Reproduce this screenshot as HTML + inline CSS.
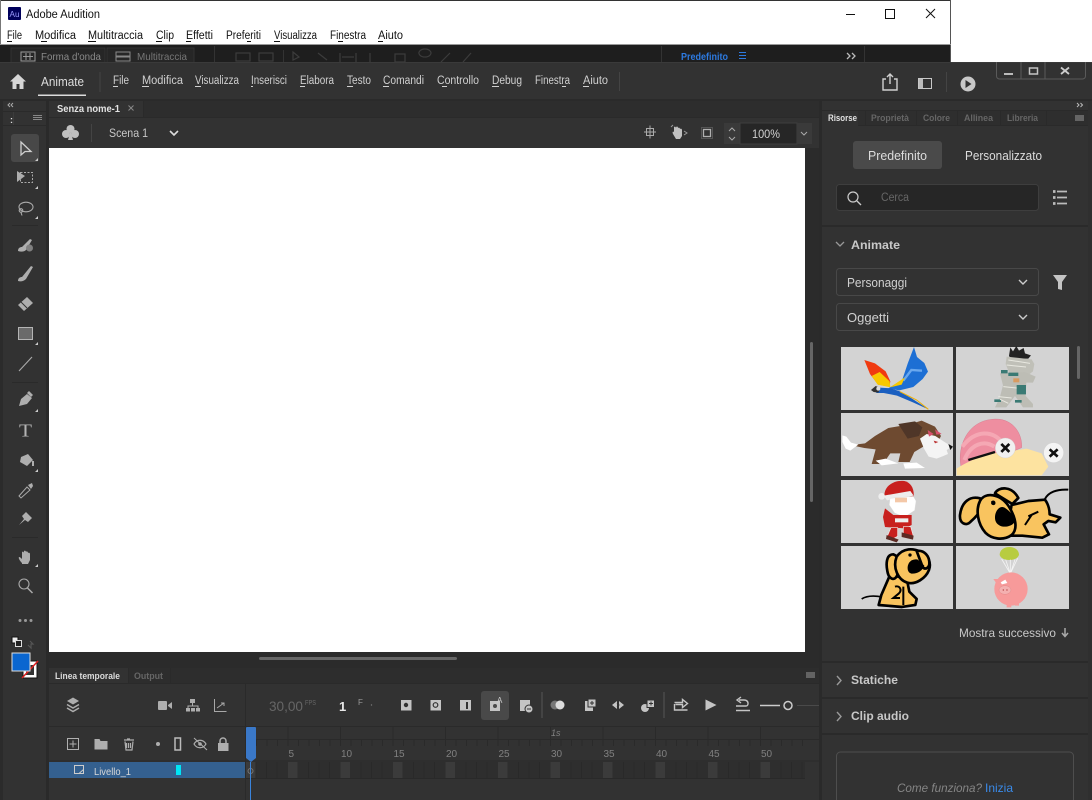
<!DOCTYPE html>
<html><head><meta charset="utf-8"><title>Adobe Animate</title>
<style>
html,body{margin:0;padding:0;width:1092px;height:800px;overflow:hidden;background:#fff}
svg{display:block;font-family:"Liberation Sans",sans-serif}
.m{font-size:11.5px;fill:#111}
.a{font-size:11.5px;fill:#d0d0d0}
.i{fill:none;stroke:#aaa;stroke-width:1.1}
.f{fill:#aeaeae}
.u{stroke:#d0d0d0;stroke-width:1}
.w{stroke:#111;stroke-width:1}
</style></head><body>
<svg width="1092" height="800" viewBox="0 0 1092 800" xmlns="http://www.w3.org/2000/svg">
<!-- Audition window -->
<rect width="1092" height="800" fill="#fff"/>
<rect x="0" y="0" width="951" height="1" fill="#333"/>
<rect x="950" y="0" width="1" height="62" fill="#555"/>
<rect x="0" y="0" width="1" height="62" fill="#777"/>
<rect x="8" y="7" width="13" height="13" fill="#00005b" rx="1"/>
<text x="9.5" y="17" font-size="8" fill="#9999ff" textLength="10" lengthAdjust="spacingAndGlyphs">Au</text>
<text x="26" y="18" class="m" textLength="74" lengthAdjust="spacingAndGlyphs">Adobe Audition</text>
<rect x="846" y="14" width="9" height="1" fill="#111"/>
<rect x="885.5" y="9.5" width="9" height="9" fill="none" stroke="#111"/>
<path d="M926 9l9 9M935 9l-9 9" stroke="#111" fill="none"/>
<g class="m">
<text x="7" y="39" textLength="15" lengthAdjust="spacingAndGlyphs">File</text>
<text x="35" y="39" textLength="41" lengthAdjust="spacingAndGlyphs">Modifica</text>
<text x="88" y="39" textLength="55" lengthAdjust="spacingAndGlyphs">Multitraccia</text>
<text x="156" y="39" textLength="18" lengthAdjust="spacingAndGlyphs">Clip</text>
<text x="186" y="39" textLength="27" lengthAdjust="spacingAndGlyphs">Effetti</text>
<text x="226" y="39" textLength="35" lengthAdjust="spacingAndGlyphs">Preferiti</text>
<text x="274" y="39" textLength="43" lengthAdjust="spacingAndGlyphs">Visualizza</text>
<text x="330" y="39" textLength="36" lengthAdjust="spacingAndGlyphs">Finestra</text>
<text x="378" y="39" textLength="25" lengthAdjust="spacingAndGlyphs">Aiuto</text>
</g>
<path class="w" d="M7 41.5h5M41 41.5h6M88 41.5h8M156 41.5h6M186 41.5h5M247 41.5h4M274 41.5h6M338 41.5h5M378 41.5h5"/>
<rect x="0" y="44" width="951" height="1" fill="#999"/>
<rect x="0" y="45" width="950" height="18" fill="#1e1e1e"/>
<rect x="11" y="48" width="94" height="15" fill="#262626" stroke="#333"/>
<rect x="107" y="48" width="87" height="15" fill="#262626" stroke="#333"/>
<rect x="21" y="52" width="14" height="9" fill="none" stroke="#999"/>
<path d="M23 56.5h10M26 53v7M30 53v7" stroke="#999"/>
<rect x="116" y="52" width="14" height="9" fill="none" stroke="#888"/><path d="M116 56.5h14" stroke="#888" stroke-width="2"/>
<text x="41" y="60" font-size="10.5" fill="#8a8a8a" textLength="60" lengthAdjust="spacingAndGlyphs">Forma d'onda</text>
<text x="137" y="60" font-size="10.5" fill="#777" textLength="50" lengthAdjust="spacingAndGlyphs">Multitraccia</text>
<path d="M214.5 46v17M661.5 46v17M864.5 46v17M283.5 50v12" stroke="#333"/>
<g fill="none" stroke="#3c3c3c" stroke-width="1.2">
<rect x="236" y="53" width="14" height="8"/><rect x="259" y="53" width="14" height="8"/>
<path d="M293 52l6 5-6 3zM318 53l9 7M340 53v9M356 53v9M342 57h12M370 53v9M395 54h10v8h-10zM425 57a6 4 0 1 0-.1 0M441 62l9-9M463 62l8-9"/>
</g>
<text x="681" y="60" font-size="10.5" fill="#2d7ae0" font-weight="bold" textLength="47" lengthAdjust="spacingAndGlyphs">Predefinito</text>
<path d="M739 52.5h7M739 55.5h7M739 58.5h7" stroke="#2d7ae0"/>
<path d="M847 53l3 3-3 3M852 53l3 3-3 3" fill="none" stroke="#bbb" stroke-width="1.3"/>

<!-- Animate window -->
<rect x="0" y="62" width="1092" height="738" fill="#323232"/>
<rect x="0" y="62" width="1092" height="1" fill="#3a3a3a"/>
<path d="M10 81.5l8-7.5 8 7.5h-2.500v7.500h-4v-5h-3v5h-4v-7.500z" fill="#d6d6d6"/>
<text x="41" y="86" font-size="12.5" fill="#dcdcdc" textLength="43" lengthAdjust="spacingAndGlyphs">Animate</text>
<rect x="38" y="94.500" width="48" height="1.500" fill="#dcdcdc"/>
<path d="M100 72v20M619.500 72v19M946.500 72v20" stroke="#444"/>
<g class="a">
<text x="113" y="84" textLength="16" lengthAdjust="spacingAndGlyphs">File</text>
<text x="142" y="84" textLength="41" lengthAdjust="spacingAndGlyphs">Modifica</text>
<text x="195" y="84" textLength="44" lengthAdjust="spacingAndGlyphs">Visualizza</text>
<text x="251" y="84" textLength="36" lengthAdjust="spacingAndGlyphs">Inserisci</text>
<text x="300" y="84" textLength="34" lengthAdjust="spacingAndGlyphs">Elabora</text>
<text x="347" y="84" textLength="24" lengthAdjust="spacingAndGlyphs">Testo</text>
<text x="383" y="84" textLength="41" lengthAdjust="spacingAndGlyphs">Comandi</text>
<text x="437" y="84" textLength="42" lengthAdjust="spacingAndGlyphs">Controllo</text>
<text x="492" y="84" textLength="30" lengthAdjust="spacingAndGlyphs">Debug</text>
<text x="535" y="84" textLength="35" lengthAdjust="spacingAndGlyphs">Finestra</text>
<text x="583" y="84" textLength="25" lengthAdjust="spacingAndGlyphs">Aiuto</text>
</g>
<path class="u" d="M113 86.500h5M142 86.500h7M195 86.500h6M251 86.500h2M300 86.500h5M347 86.500h6M383 86.500h6M442 86.500h5M492 86.500h7M562 86.500h4M583 86.500h6"/>
<!-- top-right -->
<path d="M886 79h-3v11h14v-11h-3M890 84v-9M887 77l3-3 3 3" fill="none" stroke="#d0d0d0" stroke-width="1.400"/>
<rect x="918.500" y="78.500" width="13" height="10" fill="none" stroke="#c8c8c8"/><rect x="919" y="79" width="4" height="9" fill="#bbb"/>
<circle cx="968" cy="84" r="7.500" fill="#c8c8c8"/><path d="M965.500 80l6 4-6 4z" fill="#323232"/>
<path d="M996.500 62v14a3 3 0 0 0 3 3h83a3 3 0 0 0 3-3v-14M1021 62v17M1045 62v17" fill="none" stroke="#5a5a5a"/>
<rect x="1004" y="73" width="9" height="2" fill="#bbb"/>
<rect x="1029.500" y="68" width="8" height="6" fill="none" stroke="#c4c4c4" stroke-width="1.500"/>
<path d="M1061 67.500l8 6.500M1069 67.500l-8 6.500" stroke="#ccc" stroke-width="1.800"/>

<!-- divider row -->
<rect x="0" y="99" width="1092" height="2" fill="#2a2a2a"/>
<!-- left edge + toolbar -->
<rect x="0" y="101" width="3" height="699" fill="#2b2b2b"/>
<rect x="46" y="101" width="3" height="699" fill="#2a2a2a"/>
<path d="M10 103l-2 2 2 2M13 103l-2 2 2 2" fill="none" stroke="#aaa"/>
<rect x="3" y="111" width="43" height="1" fill="#2a2a2a"/>
<rect x="3" y="125" width="43" height="1" fill="#2a2a2a"/>
<rect x="13" y="112" width="1" height="13" fill="#3c3c3c"/>
<text x="10" y="123" font-size="9" fill="#ddd" font-weight="bold">:</text>
<path d="M33 115.500h9M33 117.500h9M33 119.500h9" stroke="#888" stroke-width="1"/>

<!-- doc tab + scene bar -->
<rect x="49" y="101" width="771" height="16" fill="#2d2d2d"/>
<rect x="49" y="101" width="94" height="16" fill="#323232"/>
<rect x="143" y="101" width="1" height="16" fill="#2a2a2a"/>
<rect x="49" y="117" width="771" height="1" fill="#2a2a2a"/>
<text x="57" y="112" font-size="10.500" font-weight="bold" fill="#e4e4e4" textLength="63" lengthAdjust="spacingAndGlyphs">Senza nome-1</text>
<path d="M128.500 105.500l5 5M133.500 105.500l-5 5" stroke="#888"/>
<rect x="49" y="118" width="771" height="30" fill="#323232"/>
<g fill="#c0c0c0"><circle cx="70.500" cy="129" r="4"/><circle cx="66" cy="134" r="4"/><circle cx="75" cy="134" r="4"/><path d="M70 133h1l2 7h-5z"/></g>
<path d="M91.500 124v18" stroke="#444"/>
<text x="109" y="137" font-size="12" fill="#c8c8c8" textLength="39" lengthAdjust="spacingAndGlyphs">Scena 1</text>
<path d="M170 131l4 4 4-4" fill="none" stroke="#ddd" stroke-width="1.600"/>
<g fill="none" stroke="#aaa">
<rect x="646.500" y="128.500" width="7" height="7"/><path d="M650 125.500v13M644 132h12"/>
</g>
<path d="M673 134c-1-2 0-3 1-2v-5c1-1 2 0 2 1 0-2 2-2 2 0 1-1 2 0 2 1 1-1 2 0 2 1v6l-2 3h-4z" fill="#c0c0c0"/>
<path d="M684 131l3 2-3 2M671 127l2-2" stroke="#999" fill="none"/>
<rect x="701.500" y="127.500" width="11" height="11" fill="none" stroke="#777" stroke-dasharray="1 1"/>
<rect x="703.500" y="129.500" width="7" height="7" fill="none" stroke="#b0b0b0" stroke-width="1.300"/>
<rect x="724" y="123" width="16" height="21" fill="#3a3a3a"/>
<path d="M729 131l3-3 3 3M729 137l3 3 3-3" fill="none" stroke="#aaa"/>
<rect x="740" y="123" width="57" height="21" fill="#262626" stroke="#3e3e3e"/>
<text x="752" y="138" font-size="12" fill="#d0d0d0" textLength="28" lengthAdjust="spacingAndGlyphs">100%</text>
<rect x="797" y="123" width="15" height="21" fill="#3a3a3a"/>
<path d="M801 132l3 3 3-3" fill="none" stroke="#aaa"/>

<!-- stage -->
<rect x="49" y="148" width="771" height="520" fill="#2b2b2b"/>
<rect x="49" y="148" width="756" height="504" fill="#fff"/>
<rect x="810" y="342" width="3" height="160" rx="1.500" fill="#666"/>
<rect x="259" y="657" width="198" height="3" rx="1.500" fill="#666"/>

<!-- toolbar tools -->
<rect x="11" y="134" width="28" height="28" rx="3" fill="#484848"/>
<path d="M21 142v13l4-3.500 6 0z" fill="none" stroke="#d0d0d0" stroke-width="1.300"/>
<path d="M17 171l8 5-8 6z" class="f"/><rect x="20.500" y="172.500" width="12" height="10" fill="none" stroke="#aaa" stroke-dasharray="2 1.500"/>
<ellipse cx="26" cy="207" rx="7" ry="4.800" class="i"/><circle cx="21" cy="210.500" r="1.800" class="i"/><path d="M21 212.500l1 3" class="i"/>
<path d="M12 225.500h26M12 382.500h26M12 537.500h26" stroke="#2a2a2a"/>
<path d="M18 251c0-3 2-4 4-4l8-8 2 1-6 10c-2 2-5 2-8 1z" class="f"/><circle cx="29.500" cy="248" r="3.500" fill="#808080"/>
<path d="M18 281c0-3 2-4 4-4l9-11 2 1-7 12c-2 2-5 3-8 2z" class="f"/>
<path d="M27 297l6 6-9 8-6-6z" class="f"/><path d="M21 302l6 6" stroke="#323232"/>
<rect x="18.500" y="327.500" width="14" height="12" fill="#6a6a6a" stroke="#b4b4b4"/>
<path d="M19 371l13-14" class="i"/>
<path d="M19 406l2-7 6-5 5 4-5 6zM27 393l2-2 4 4-2 2z" class="f"/>
<text x="19" y="436.500" font-family="Liberation Serif" font-size="18" fill="#b4b4b4" textLength="13" lengthAdjust="spacingAndGlyphs">T</text>
<path d="M21 457l7-3 5 6-6 6-7-4zM22 452l3 3" class="f"/><path d="M33 461v5" stroke="#aeaeae" stroke-width="2"/>
<path d="M19 496l8-9 3 3-9 8z" fill="none" stroke="#aaa"/><path d="M28 485l4-2 1 3-2 3z" class="f"/>
<path d="M19 525l5-6-2-3 4-4 6 6-4 4-3-2z" class="f"/>
<path d="M22 563c-2-2-4-5-3-6 1 0 2 1 3 2v-7c1-1 2 0 2 1v-2c1-1 2 0 2 1 0-1 2-1 2 1 1-1 2 0 2 1v6l-2 4h-6z" class="f"/>
<circle cx="24" cy="584" r="5" class="i"/><path d="M27.500 588l5 5" stroke="#aaa" stroke-width="1.500"/>
<g fill="#999"><circle cx="20" cy="620.500" r="1.500"/><circle cx="25.500" cy="620.500" r="1.500"/><circle cx="31" cy="620.500" r="1.500"/></g>
<g fill="#ccc"><path d="M38 158l-3 3h3zM38 186l-3 3h3zM38 216l-3 3h3zM38 342l-3 3h3zM38 409l-3 3h3zM38 469l-3 3h3zM38 564l-3 3h3z"/></g>
<rect x="12" y="637" width="6" height="6" fill="#eee" stroke="#111"/><rect x="15.500" y="640.500" width="6" height="6" fill="#222" stroke="#ddd"/>
<path d="M30 641l3 3h-2v4l-3-3" fill="none" stroke="#555" stroke-width="1.200"/>
<rect x="23" y="661" width="14" height="17" fill="#fff" stroke="#111"/>
<rect x="26" y="665" width="8" height="10" fill="#333"/>
<path d="M22 678l16-17" stroke="#e02020" stroke-width="1.500"/>
<rect x="12" y="653" width="18" height="18" fill="#0a66d0" stroke="#ddd"/>

<!-- timeline -->
<rect x="49" y="668" width="771" height="132" fill="#323232"/>
<rect x="49" y="668" width="771" height="15" fill="#2d2d2d"/>
<rect x="49" y="668" width="79" height="15" fill="#323232"/>
<rect x="128" y="668" width="1" height="15" fill="#2a2a2a"/>
<rect x="49" y="683" width="771" height="1" fill="#2a2a2a"/>
<rect x="170" y="668" width="1" height="15" fill="#2a2a2a"/>
<text x="55" y="679" font-size="9.500" font-weight="bold" fill="#dcdcdc" textLength="65" lengthAdjust="spacingAndGlyphs">Linea temporale</text>
<text x="134" y="679" font-size="9.500" font-weight="bold" fill="#666" textLength="29" lengthAdjust="spacingAndGlyphs">Output</text>
<path d="M806 673h9M806 675h9M806 677h9" stroke="#999" stroke-width="1" />
<path d="M245.500 684v116" stroke="#2a2a2a"/>
<rect x="49" y="726" width="771" height="1" fill="#2a2a2a"/>
<path d="M67 701l6-3.500 6 3.500-6 3.500z" class="f"/><path d="M67 704.500l6 3.500 6-3.500M67 708l6 3.500 6-3.500" fill="none" stroke="#aeaeae" stroke-width="1.500"/>
<rect x="158" y="701" width="9" height="9" rx="1" class="f"/><path d="M168 705l4-3v7l-4-3z" class="f"/>
<g class="f"><rect x="190" y="699" width="5" height="4"/><rect x="186" y="708" width="4" height="3.500"/><rect x="191" y="708" width="4" height="3.500"/><rect x="196" y="708" width="4" height="3.500"/></g><path d="M192.500 703v3M188 708v-2h10v2" fill="none" stroke="#aeaeae"/>
<path d="M214.500 699v12.500h12M217 708l7-5M221 703h3v3" fill="none" stroke="#a8a8a8"/>
<text x="269" y="711" font-size="14" fill="#666" textLength="34" lengthAdjust="spacingAndGlyphs">30,00</text>
<text x="305" y="705" font-size="7.500" fill="#666" textLength="11" lengthAdjust="spacingAndGlyphs">FPS</text>
<text x="339" y="711" font-size="13" fill="#e8e8e8" font-weight="bold">1</text>
<text x="358" y="705" font-size="8" fill="#999">F</text>
<circle cx="371.500" cy="705" r=".7" fill="#777"/>
<!-- tl icons row 1 -->
<rect x="401" y="700" width="10.500" height="10.500" fill="#c4c4c4"/><circle cx="406" cy="705" r="2.200" fill="#323232"/>
<rect x="430.500" y="700" width="10.500" height="10.500" fill="#c4c4c4"/><circle cx="435.500" cy="705" r="2.300" fill="none" stroke="#323232" stroke-width="1.200"/>
<rect x="460" y="700" width="11" height="10.500" fill="#c4c4c4"/><rect x="466" y="702" width="2" height="7" fill="#323232"/>
<rect x="481" y="691" width="28" height="29" rx="3" fill="#494949"/>
<rect x="490" y="701" width="10" height="10" fill="#c4c4c4"/><circle cx="495" cy="706" r="2" fill="#494949"/><text x="497" y="703" font-size="8" fill="#ccc">A</text>
<rect x="520" y="700" width="10" height="11" fill="#c4c4c4"/><circle cx="529" cy="709" r="4" fill="#c4c4c4" stroke="#323232"/><path d="M527 709h4" stroke="#323232"/>
<path d="M542 692v26M664 692v26" stroke="#555"/>
<circle cx="555" cy="705" r="4.500" fill="#777"/><circle cx="560" cy="705" r="4.500" fill="#ddd"/>
<rect x="585" y="701" width="8" height="10" fill="#c4c4c4"/><rect x="588" y="699" width="8" height="8" fill="#c4c4c4" stroke="#323232"/><path d="M590 703h4M592 701v4" stroke="#323232"/>
<path d="M617 701l-5 4 5 4zM619 701l5 4-5 4z" fill="#c4c4c4"/><path d="M617 703l2 2-2 2" stroke="#323232" fill="none"/>
<circle cx="645" cy="708" r="4" fill="#c4c4c4"/><rect x="647" y="700" width="7.500" height="7.500" fill="#c4c4c4" stroke="#323232"/><path d="M649 703.500h4M651 701.500v4" stroke="#323232"/>
<path d="M674.500 704v6h13M674.500 702.500h8v-3l5 4-5 4v-3h-7" fill="none" stroke="#c4c4c4" stroke-width="1.400"/>
<path d="M705.500 699.500l11 5.500-11 5.500z" fill="#c4c4c4"/>
<path d="M736 706h10c3 0 3-6-2-6h-5M741 697l-4 3 4 3M736 710.500h14" fill="none" stroke="#c4c4c4" stroke-width="1.400"/>
<path d="M760 705.500h20" stroke="#ccc" stroke-width="1.500"/><circle cx="788" cy="705.500" r="4" fill="none" stroke="#ccc" stroke-width="1.500"/><path d="M797 705.500h23" stroke="#4a4a4a"/>
<!-- tl icons row 2 -->
<rect x="67.500" y="738.500" width="11" height="11" fill="none" stroke="#b0b0b0"/><path d="M73 740.500v7M69.500 744h7" stroke="#b0b0b0"/>
<path d="M94.500 739h5l1 2h7v8.500h-13z" class="f"/>
<path d="M124 740h10M125 741.500l1 8.500h6l1-8.500M127 739h3M128.500 743v5M126.500 743v5M130.500 743v5" fill="none" stroke="#aeaeae" stroke-width="1.200"/>
<circle cx="158" cy="744" r="2" class="f"/>
<rect x="175" y="738" width="5.500" height="12" fill="none" stroke="#bbb" stroke-width="1.500"/>
<path d="M194 744c3-5 9-5 12 0-3 5-9 5-12 0z" fill="none" stroke="#aeaeae" stroke-width="1.200"/><circle cx="200" cy="744" r="1.800" class="f"/><path d="M194 738l13 12" stroke="#aeaeae"/>
<rect x="218" y="743" width="10.500" height="8" class="f"/><path d="M220 743v-2c0-4 6-4 6 0v2" fill="none" stroke="#aeaeae" stroke-width="1.500"/>
<!-- ruler -->
<g stroke="#2a2a2a">
<path d="M49.500 761h770"/>
<path d="M288 727v12M340.500 727v12M393 727v12M445.500 727v12M498 727v12M550.500 727v12M603 727v12M655.500 727v12M708 727v12M760.500 727v12"/>
<path d="M255 739.500h564"/>
<path d="M256.500 739v7M267 739v7M277.500 739v7M288 739v7M298.500 739v7M309 739v7M319.500 739v7M330 739v7M340.500 739v7M351 739v7M361.500 739v7M372 739v7M382.500 739v7M393 739v7M403.500 739v7M414 739v7M424.500 739v7M435 739v7M445.500 739v7M456 739v7M466.500 739v7M477 739v7M487.500 739v7M498 739v7M508.500 739v7M519 739v7M529.500 739v7M540 739v7M550.500 739v7M561 739v7M571.500 739v7M582 739v7M592.500 739v7M603 739v7M613.500 739v7M624 739v7M634.500 739v7M645 739v7M655.500 739v7M666 739v7M676.500 739v7M687 739v7M697.500 739v7M708 739v7M718.500 739v7M729 739v7M739.500 739v7M750 739v7M760.500 739v7M771 739v7M781.500 739v7M792 739v7M802.500 739v7"/>
</g>
<g font-size="10" fill="#808080">
<text x="288.500" y="757">5</text><text x="341" y="757">10</text><text x="393.500" y="757">15</text><text x="446" y="757">20</text><text x="498.500" y="757">25</text><text x="551" y="757">30</text><text x="603.500" y="757">35</text><text x="656" y="757">40</text><text x="708.500" y="757">45</text><text x="761" y="757">50</text>
<text x="551" y="736" font-style="italic" font-size="9">1s</text>
</g>
<!-- layer row -->
<rect x="49" y="762" width="196" height="16" fill="#34608f"/>
<rect x="74.500" y="765.500" width="9" height="8" fill="none" stroke="#ccc"/><path d="M79 773.500l4.500-4" stroke="#ccc"/>
<text x="94" y="775" font-size="10.500" fill="#d8d8d8" textLength="37" lengthAdjust="spacingAndGlyphs">Livello_1</text>
<rect x="176" y="765" width="5" height="10" fill="#00e5f5"/>
<rect x="246" y="762" width="559" height="16" fill="#2e2e2e"/>
<g fill="#3b3b3b"><rect x="246" y="762" width="9.500" height="16"/><rect x="288" y="762" width="9.500" height="16"/><rect x="340.500" y="762" width="9.500" height="16"/><rect x="393" y="762" width="9.500" height="16"/><rect x="445.500" y="762" width="9.500" height="16"/><rect x="498" y="762" width="9.500" height="16"/><rect x="550.500" y="762" width="9.500" height="16"/><rect x="603" y="762" width="9.500" height="16"/><rect x="655.500" y="762" width="9.500" height="16"/><rect x="708" y="762" width="9.500" height="16"/><rect x="760.500" y="762" width="9.500" height="16"/></g>
<path d="M256 762v16M266.500 762v16M277 762v16M308.500 762v16M319 762v16M329.500 762v16M361 762v16M371.500 762v16M382 762v16M413.500 762v16M424 762v16M434.500 762v16M466 762v16M476.500 762v16M487 762v16M518.500 762v16M529 762v16M539.500 762v16M571 762v16M581.500 762v16M592 762v16M623.500 762v16M634 762v16M644.500 762v16M676 762v16M686.500 762v16M697 762v16M728.500 762v16M739 762v16M749.500 762v16M781 762v16M791.500 762v16M802 762v16" stroke="#292929"/>
<path d="M246 778.500h559" stroke="#292929"/>
<circle cx="250.500" cy="771" r="2.500" fill="none" stroke="#777"/>
<path d="M246 728a1 1 0 0 1 1-1h8a1 1 0 0 1 1 1v30l-5 4-5-4z" fill="#3a78c8"/>
<rect x="250" y="762" width="1" height="38" fill="#3a84dc"/>

<!-- right panel -->
<rect x="820" y="101" width="272" height="699" fill="#323232"/>
<rect x="819" y="101" width="3" height="699" fill="#2a2a2a"/>
<rect x="1088" y="101" width="4" height="699" fill="#2f2f2f"/>
<rect x="822" y="110" width="266" height="1" fill="#2a2a2a"/>
<rect x="822" y="111" width="266" height="14" fill="#2e2e2e"/>
<rect x="822" y="111" width="36" height="15" fill="#323232"/>
<path d="M916.500 111v14M957.500 111v14M1000.500 111v14M1046.500 111v14M865.500 111v14" stroke="#2a2a2a"/>
<path d="M858 125.500h230" stroke="#2a2a2a"/>
<path d="M1077 103l2 2-2 2M1080.500 103l2 2-2 2" fill="none" stroke="#bbb"/>
<g font-size="9.500" font-weight="bold">
<text x="828" y="121" fill="#e0e0e0" textLength="29" lengthAdjust="spacingAndGlyphs">Risorse</text>
<text x="871" y="121" fill="#666" textLength="38" lengthAdjust="spacingAndGlyphs">Proprietà</text>
<text x="923" y="121" fill="#666" textLength="27" lengthAdjust="spacingAndGlyphs">Colore</text>
<text x="964" y="121" fill="#666" textLength="29" lengthAdjust="spacingAndGlyphs">Allinea</text>
<text x="1007" y="121" fill="#666" textLength="31" lengthAdjust="spacingAndGlyphs">Libreria</text>
</g>
<path d="M1075 116h9M1075 118h9M1075 120h9" stroke="#999"/>
<rect x="853" y="141" width="89" height="28" rx="3" fill="#4a4a4a"/>
<text x="868" y="160" font-size="12.500" fill="#dcdcdc" textLength="59" lengthAdjust="spacingAndGlyphs">Predefinito</text>
<text x="965" y="160" font-size="12.500" fill="#dcdcdc" textLength="77" lengthAdjust="spacingAndGlyphs">Personalizzato</text>
<rect x="836.500" y="184.500" width="202" height="26" rx="3" fill="#262626" stroke="#3e3e3e"/>
<circle cx="853" cy="197" r="5" fill="none" stroke="#ccc" stroke-width="1.200"/><path d="M857 201l4 4" stroke="#ccc" stroke-width="1.300"/>
<text x="881" y="201" font-size="11.500" fill="#666" textLength="28" lengthAdjust="spacingAndGlyphs">Cerca</text>
<path d="M1057 191.500h10M1057 197.500h10M1057 203.500h10" stroke="#bbb" stroke-width="1.800"/><path d="M1053 191.500h2.500M1053 197.500h2.500M1053 203.500h2.500" stroke="#bbb" stroke-width="2.800"/>
<rect x="822" y="225" width="266" height="2" fill="#2a2a2a"/>
<path d="M836 242l4 4 4-4" fill="none" stroke="#999" stroke-width="1.300"/>
<text x="851" y="249" font-size="12" font-weight="bold" fill="#c8c8c8" textLength="49" lengthAdjust="spacingAndGlyphs">Animate</text>
<rect x="836.500" y="268.500" width="202" height="27" rx="3" fill="none" stroke="#484848"/>
<rect x="836.500" y="303.500" width="202" height="27" rx="3" fill="none" stroke="#484848"/>
<text x="847" y="287" font-size="12.500" fill="#d0d0d0" textLength="60" lengthAdjust="spacingAndGlyphs">Personaggi</text>
<text x="847" y="322" font-size="12.500" fill="#d0d0d0" textLength="42" lengthAdjust="spacingAndGlyphs">Oggetti</text>
<path d="M1019 280l4 4 4-4M1019 315l4 4 4-4" fill="none" stroke="#ccc" stroke-width="1.400"/>
<path d="M1053 275h14l-5 7v8l-4-1v-7z" fill="#c4c4c4"/>
<rect x="1077" y="346" width="3" height="33" rx="1.500" fill="#666"/>

<!-- cards -->
<g fill="#d3d3d3">
<rect x="841" y="347" width="112" height="63"/><rect x="956" y="347" width="113" height="63"/>
<rect x="841" y="413" width="112" height="63"/><rect x="956" y="413" width="113" height="63"/>
<rect x="841" y="480" width="112" height="63"/><rect x="956" y="480" width="113" height="63"/>
<rect x="841" y="546" width="112" height="63"/><rect x="956" y="546" width="113" height="63"/>
</g>
<!-- parrot & mummy -->
<g transform="translate(835,340) scale(.3333)">
<path d="M160 145l42-26 16-48 19-50 9 30 22 18 11 26-16 22-28 24-42 10z" fill="#1d6fd4"/>
<path d="M205 122l24-32 32 2" stroke="#6aa8ee" stroke-width="7" fill="none"/>
<path d="M88 60l32 10 32 24 14 30-3 16-34-6-24-32z" fill="#f03a10"/>
<path d="M110 108l24-12 30 28 2 18-38-8z" fill="#f8c800"/>
<path d="M165 142l45-30-10 22z" fill="#f8c800"/>
<path d="M122 142l45 3 25 8 38 22 52 34-48-22-48-20-40-8-22 0z" fill="#1a5fc0"/>
<path d="M195 155l50 25 35 28" stroke="#f0b000" stroke-width="3" fill="none"/>
<path d="M108 150l14-12 14 6-6 14-14-2z" fill="#333"/><circle cx="130" cy="146" r="6" fill="#ddd"/>
<path d="M522 48l4-26 8 12 10-16 8 14 14-8 4 16 18 6-8 10-50 2z" fill="#222"/>
<path d="M515 50l75 8 8 14-4 22-10 8-60 0-12-30z" fill="#c0c0b8"/>
<path d="M495 100l75-4 32 14-8 18-20 0-2 40 22 24 0 10-30 0-24-34-26 34-34 0 14-28 10-38z" fill="#bdbdb5"/>
<path d="M498 90h20v10h-20zM520 98h30v10h-30zM545 135h28v28h-28zM478 178h20v8h-20zM540 180h20v8h-20z" fill="#3a7a74"/>
<path d="M535 115h18v12h-18z" fill="#d89a60"/>
<path d="M520 60l65 10M515 75l58 6M505 140l40 4M490 170l40 4M520 190l-25-12" stroke="#e8e8e0" stroke-width="3"/>
<!-- wolf -->
<path d="M60 314l30-4 30-22 40-24 60-10 40-12 40 18 18 28-10 20-40 10-30 18-14 30-34 0 6-26-30 0-22 32-34 0 12-44-34-4-28-6z" fill="#6e4a30"/>
<path d="M190 252l50-8 22 18-10 26-34 8z" fill="#4f3628"/>
<path d="M22 286l12 4 14 18 22 6-24 18-14-6-10-20z" fill="#fff"/>
<path d="M255 296l20-14 26 6 34 22 18 10-18 10 4 12-14 6-20 8-24-6-14-24z" fill="#f4f4f4"/>
<path d="M278 270l18 12-14 8zM300 268l20 14-16 2z" fill="#d8506c"/>
<path d="M340 312l14 8-8 10z" fill="#111"/><path d="M296 302l14 4-10 4z" fill="#b33"/>
<path d="M122 362l30-6 38 14-50 6zM205 370l40-2 25 16-60 2z" fill="#fff"/>
<!-- snail -->
<path d="M378 380c-12-62 20-135 92-142 60-8 93 40 90 85l-70 30-90 40z" fill="#ee8ea0" stroke="#d06a80"/>
<path d="M382 320c40-52 92-50 122-10M388 360c20-50 60-60 90-40" stroke="#f5a8b4" stroke-width="12" fill="none"/>
<path d="M365 406l0-20c30-20 90-50 150-50l60-10 45 14 20 40-20 26z" fill="#fde3a0"/>
<path d="M400 360l80-24" stroke="#111" stroke-width="7"/>
<circle cx="511" cy="324" r="30" fill="#f0f0f0" stroke="#ccc"/><path d="M499 312l24 24M523 312l-24 24" stroke="#111" stroke-width="8"/>
<circle cx="656" cy="338" r="30" fill="#f4f4f4" stroke="#ccc"/><path d="M644 328l24 22M668 328l-24 22" stroke="#111" stroke-width="8"/>
</g>
<g transform="translate(835,475) scale(.3333)">
<!-- santa -->
<path d="M148 62c0-30 30-48 60-44 20 4 30 24 28 46z" fill="#c8201e"/>
<path d="M146 62l80-14 10 14-80 14z" fill="#eee"/><circle cx="140" cy="64" r="10" fill="#eee"/>
<path d="M165 70l70-6 8 14-4 28-30 20-30-12-16-24z" fill="#fff" stroke="#ddd"/>
<path d="M180 68h36v14h-36z" fill="#f4c8a8"/>
<path d="M150 100l25 20 55 0 0 30-20 10-60-4-6-30z" fill="#c8201e"/>
<path d="M168 158l20 0 0 26-22 12-12-6zM205 155l22 0 8 28-30-4z" fill="#c8201e" stroke="#eee" stroke-width="2"/>
<path d="M155 180l36 14-6 8-32-10zM200 172l36 10-2 12-34-8z" fill="#5c2a24"/>
<path d="M180 130h40v12h-40z" fill="#eee"/>
<!-- big dog -->
<g stroke="#000" stroke-width="8" stroke-linejoin="round" fill="#f9c45f">
<path d="M630 72c10-20 35-30 70-28" fill="none" stroke-width="6"/>
<path d="M530 90l50-12 50-4c12 16 14 36 14 44l32 10-14 14-22-4-14 10 16 30-20 10-60-6-50 0z"/>
<path d="M480 55c10-20 50-24 70 14l-18 18z"/>
<path d="M435 70c-30-8-55 10-60 50-2 25 18 35 32 20 16-14 30-30 38-50z"/>
<path d="M435 78c15-28 60-22 85 14 22 34 30 70 10 88-25 18-60 12-78-6-25-28-30-70-17-96z"/>
</g>
<path d="M480 128c0-24 18-40 32-28 18 12 30 30 26 42-4 8-22 16-38 12-14-4-20-14-20-26z" fill="#000"/>
<path d="M470 80c4-4 10-2 10 4s-8 6-10 2zM505 70l30 20" stroke="#000" stroke-width="3"/>
<path d="M570 150l20-30M610 110l-30 14" stroke="#000" stroke-width="6" fill="none"/>
<!-- sitting dog -->
<g stroke="#000" stroke-width="8" stroke-linejoin="round" fill="#f9c45f">
<path d="M80 372c15-10 40-10 62-6" fill="none" stroke-width="5"/>
<path d="M165 300l50 10 8 40 22 22-4 18-40 6-70-6 8-30z"/>
<path d="M175 238c-22 0-22 30-18 50 4 25 22 32 30 12l10-50z"/>
<path d="M185 245c20-28 50-25 72-15 25 12 32 35 25 55-10 25-40 45-65 38-28-8-45-45-32-78z"/>
<path d="M245 228c22-4 40 15 38 40-2 10-12 18-20 8z"/>
</g>
<path d="M218 282c-2-18 12-32 30-28l20 18c-6 16-20 24-36 24-8 0-13-6-14-14z" fill="#000"/>
<path d="M180 335c14-5 22 10 12 20l-17 14h20M205 335v55" stroke="#000" stroke-width="6" fill="none"/>
<circle cx="225" cy="240" r="5" fill="#000"/>
<!-- pig -->
<path d="M494 240c0-32 58-32 58 0-4 10-14 15-29 15s-25-5-29-15z" fill="#b8cc40"/>
<path d="M500 252l26 44M512 254l14 42M526 254v42M540 254l-14 42M548 250l-22 46" stroke="#f4f4f4" stroke-width="2.500"/>
<ellipse cx="528" cy="342" rx="50" ry="50" fill="#f79a9a"/>
<ellipse cx="510" cy="345" rx="18" ry="13" fill="#f4b0b0" stroke="#d97b7b"/>
<circle cx="505" cy="345" r="2" fill="#a33"/><circle cx="516" cy="345" r="2" fill="#a33"/>
<path d="M497 322l14-8 6 10-16 4z" fill="#fff"/>
<path d="M475 312l14 0-4 14z" fill="#f79a9a"/><path d="M515 385h14v12h-14zM540 382h12v10h-12z" fill="#f79a9a"/>
</g>

<!-- bottom of panel -->
<text x="959" y="637" font-size="12" fill="#c8c8c8" textLength="97" lengthAdjust="spacingAndGlyphs">Mostra successivo</text>
<path d="M1065 628v8M1062 633l3 3.500 3-3.500" fill="none" stroke="#aaa" stroke-width="1.500"/>
<rect x="822" y="661" width="266" height="2" fill="#2a2a2a"/>
<rect x="822" y="697" width="266" height="2" fill="#2a2a2a"/>
<rect x="822" y="733" width="266" height="2" fill="#2a2a2a"/>
<path d="M837 676l4 4.500-4 4.500M837 712l4 4.500-4 4.500" fill="none" stroke="#999" stroke-width="1.400"/>
<text x="851" y="684" font-size="12" font-weight="bold" fill="#c8c8c8" textLength="47" lengthAdjust="spacingAndGlyphs">Statiche</text>
<text x="851" y="720" font-size="12" font-weight="bold" fill="#c8c8c8" textLength="58" lengthAdjust="spacingAndGlyphs">Clip audio</text>
<path d="M836.500 804v-48a4 4 0 0 1 4-4h229a4 4 0 0 1 4 4v48" fill="none" stroke="#4e4e4e"/>
<text x="897" y="792" font-size="12" font-style="italic" fill="#858585" textLength="85" lengthAdjust="spacingAndGlyphs">Come funziona?</text>
<text x="985" y="792" font-size="12" fill="#3a8ae8" textLength="28" lengthAdjust="spacingAndGlyphs">Inizia</text>
</svg>
</body></html>
